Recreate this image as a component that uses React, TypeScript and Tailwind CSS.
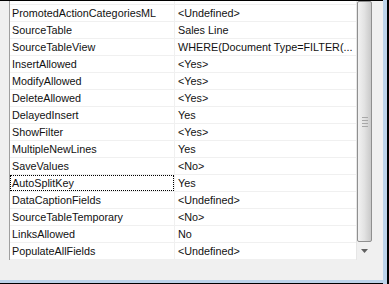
const rows: [string, string][] = [
  ["PromotedActionCategoriesML", "<Undefined>"],
  ["SourceTable", "Sales Line"],
  ["SourceTableView", "WHERE(Document Type=FILTER(..."],
  ["InsertAllowed", "<Yes>"],
  ["ModifyAllowed", "<Yes>"],
  ["DeleteAllowed", "<Yes>"],
  ["DelayedInsert", "Yes"],
  ["ShowFilter", "<Yes>"],
  ["MultipleNewLines", "Yes"],
  ["SaveValues", "<No>"],
  ["AutoSplitKey", "Yes"],
  ["DataCaptionFields", "<Undefined>"],
  ["SourceTableTemporary", "<No>"],
  ["LinksAllowed", "No"],
  ["PopulateAllFields", "<Undefined>"],
];

export default function App() {
  return (
    <div
      className="w-[389px] h-[284px] flex bg-[#f0f0f0] text-[10.8px] text-[#111] overflow-hidden"
      style={{ fontFamily: '"Liberation Sans", Arial, sans-serif' }}
    >
      <div className="flex-1 flex flex-col">
        <div className="h-px bg-black" />
        <div className="flex-1 pl-[9px] pr-[11px]">
          {/* property grid */}
          <div className="h-[259px] flex border-l border-[#a0a0a0] bg-white">
            <div className="flex-1 flex flex-col">
              <div className="h-[4px] border-b border-[#f0f0f0] flex">
                <div className="w-[165px] border-r border-[#f0f0f0]" />
              </div>
              {rows.map(([name, value], i) => (
                <div key={name} className="h-[17px] flex border-b border-[#f0f0f0]">
                  <div className="w-[165px] border-r border-[#f0f0f0] flex">
                    <div
                      className={
                        i === 10
                          ? "flex-1 flex items-center pl-[1px] border border-dotted border-black"
                          : "flex-1 flex items-center pl-[2px]"
                      }
                    >
                      {name}
                    </div>
                  </div>
                  <div className="flex-1 flex items-center pl-[3px] whitespace-nowrap overflow-hidden">
                    {value}
                  </div>
                </div>
              ))}
            </div>
            {/* scrollbar */}
            <div className="w-[16px] flex flex-col bg-[#f0f0f0] border-l border-[#e6e6e6]">
              <div className="h-[241px] rounded-[2px] border border-[#8f8f8f] bg-gradient-to-r from-[#f2f2f2] via-[#e2e2e2] to-[#c9c9c9] flex items-center justify-center">
                <div className="flex flex-col gap-[2px]">
                  <div className="w-[6px] h-px bg-[#a8a8a8]" />
                  <div className="w-[6px] h-px bg-[#a8a8a8]" />
                  <div className="w-[6px] h-px bg-[#a8a8a8]" />
                  <div className="w-[6px] h-px bg-[#a8a8a8]" />
                </div>
              </div>
              <div className="flex-1 flex items-center justify-center">
                <svg width="7" height="4" viewBox="0 0 7 4">
                  <path d="M0 0 H7 L3.5 4 Z" fill="#606060" />
                </svg>
              </div>
            </div>
          </div>
        </div>
        <div className="h-[3px] bg-[#bcd3ea]" />
        <div className="h-px bg-black" />
      </div>
      <div className="w-[4px] bg-[#bcd3ea]" />
      <div className="w-[2px] bg-black" />
    </div>
  );
}
